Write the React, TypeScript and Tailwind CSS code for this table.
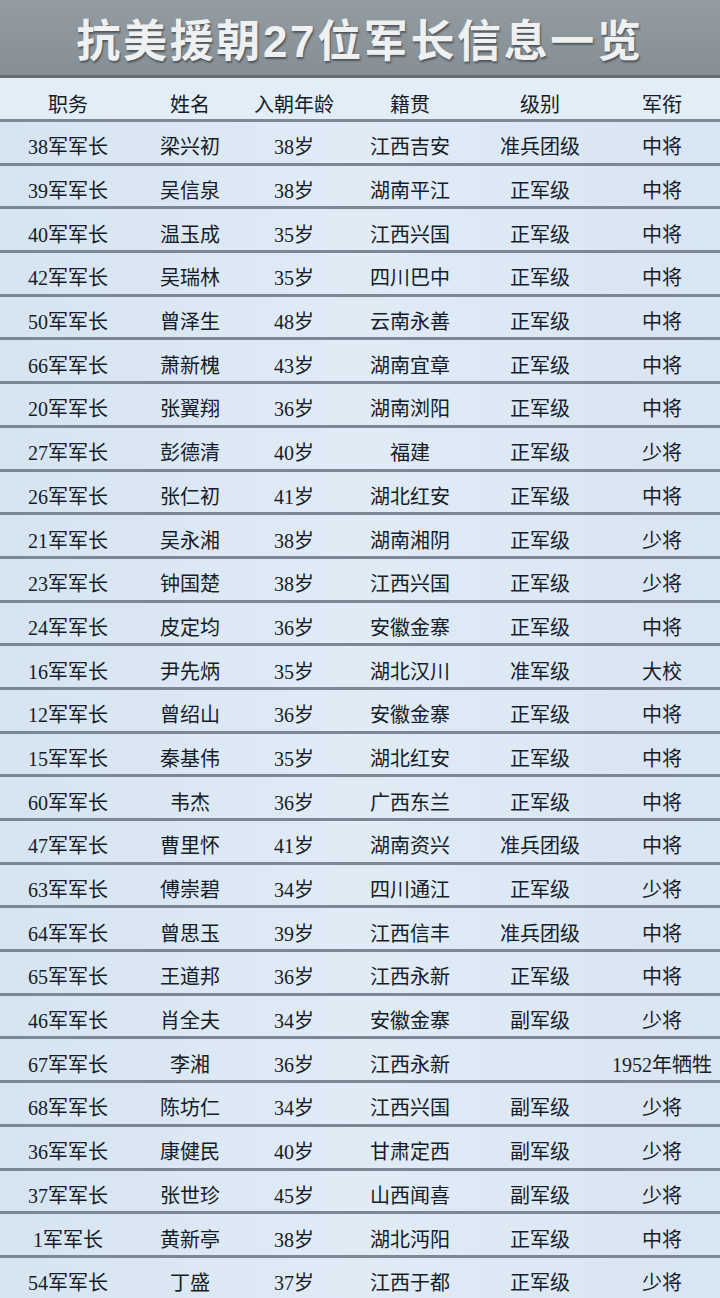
const rows: string[][] = [
  ["38军军长", "梁兴初", "38岁", "江西吉安", "准兵团级", "中将"],
  ["39军军长", "吴信泉", "38岁", "湖南平江", "正军级", "中将"],
  ["40军军长", "温玉成", "35岁", "江西兴国", "正军级", "中将"],
  ["42军军长", "吴瑞林", "35岁", "四川巴中", "正军级", "中将"],
  ["50军军长", "曾泽生", "48岁", "云南永善", "正军级", "中将"],
  ["66军军长", "萧新槐", "43岁", "湖南宜章", "正军级", "中将"],
  ["20军军长", "张翼翔", "36岁", "湖南浏阳", "正军级", "中将"],
  ["27军军长", "彭德清", "40岁", "福建", "正军级", "少将"],
  ["26军军长", "张仁初", "41岁", "湖北红安", "正军级", "中将"],
  ["21军军长", "吴永湘", "38岁", "湖南湘阴", "正军级", "少将"],
  ["23军军长", "钟国楚", "38岁", "江西兴国", "正军级", "少将"],
  ["24军军长", "皮定均", "36岁", "安徽金寨", "正军级", "中将"],
  ["16军军长", "尹先炳", "35岁", "湖北汉川", "准军级", "大校"],
  ["12军军长", "曾绍山", "36岁", "安徽金寨", "正军级", "中将"],
  ["15军军长", "秦基伟", "35岁", "湖北红安", "正军级", "中将"],
  ["60军军长", "韦杰", "36岁", "广西东兰", "正军级", "中将"],
  ["47军军长", "曹里怀", "41岁", "湖南资兴", "准兵团级", "中将"],
  ["63军军长", "傅崇碧", "34岁", "四川通江", "正军级", "少将"],
  ["64军军长", "曾思玉", "39岁", "江西信丰", "准兵团级", "中将"],
  ["65军军长", "王道邦", "36岁", "江西永新", "正军级", "中将"],
  ["46军军长", "肖全夫", "34岁", "安徽金寨", "副军级", "少将"],
  ["67军军长", "李湘", "36岁", "江西永新", "", "1952年牺牲"],
  ["68军军长", "陈坊仁", "34岁", "江西兴国", "副军级", "少将"],
  ["36军军长", "康健民", "40岁", "甘肃定西", "副军级", "少将"],
  ["37军军长", "张世珍", "45岁", "山西闻喜", "副军级", "少将"],
  ["1军军长", "黄新亭", "38岁", "湖北沔阳", "正军级", "中将"],
  ["54军军长", "丁盛", "37岁", "江西于都", "正军级", "少将"],
];

const headers = ["职务", "姓名", "入朝年龄", "籍贯", "级别", "军衔"];
const grid = "grid grid-cols-[136px_108px_100px_132px_128px_116px]";

export default function App() {
  return (
    <div className="w-[720px] h-[1298px] overflow-hidden bg-[#dbe7f3] font-['Liberation_Serif','Noto_Sans_CJK_SC',serif] text-[#161c28]">
      {/* 标题 */}
      <div className="h-[78px] flex items-center justify-center bg-gradient-to-b from-[#939ca1] to-[#868f95] border-b-[3px] border-[#646c71]">
        <h1 className="pt-2 text-[44px] leading-none font-bold tracking-[0.06em] text-[#eef0f1] font-['Liberation_Sans','Noto_Sans_CJK_SC',sans-serif] [text-shadow:1px_2px_2px_rgba(40,45,50,0.6)]">
          抗美援朝27位军长信息一览
        </h1>
      </div>

      {/* 表头 */}
      <div className={`${grid} h-[44px] items-center bg-[#e3edf7] border-b-[3px] border-[#7d8994] text-[20px]`}>
        {headers.map((h) => (
          <div key={h} className="text-center pt-[12px]">
            {h}
          </div>
        ))}
      </div>

      {rows.map((r, i) => (
        <div
          key={i}
          className={`${grid} h-[43.7px] items-center bg-gradient-to-r from-[#d6e4f1] via-[#e0ebf6] to-[#d8e5f2] border-b-[3px] border-[#7b8792] text-[20px]`}
        >
          {r.map((c, j) => (
            <div key={j} className="text-center whitespace-nowrap pt-[10px]">
              {c}
            </div>
          ))}
        </div>
      ))}
    </div>
  );
}
